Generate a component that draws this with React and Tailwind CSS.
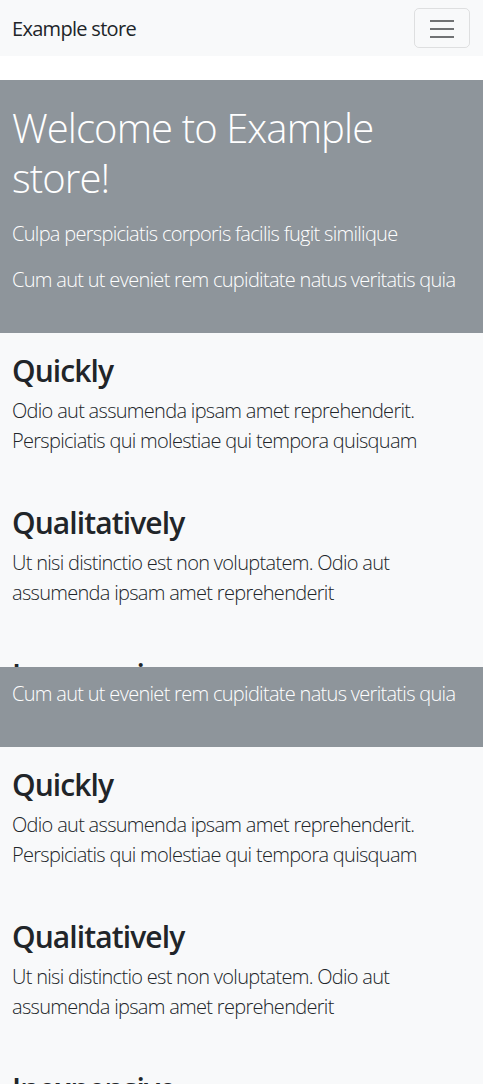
import React from 'react'

const font = { fontFamily: '"Open Sans", "Noto Sans", sans-serif' }

const features = [
  {
    title: 'Quickly',
    text: 'Odio aut assumenda ipsam amet reprehenderit. Perspiciatis qui molestiae qui tempora quisquam',
  },
  {
    title: 'Qualitatively',
    text: 'Ut nisi distinctio est non voluptatem. Odio aut assumenda ipsam amet reprehenderit',
  },
  {
    title: 'Inexpensive',
    text: 'Doloribus distinctio eveniet fugit voluptatibus quod nostrum rerum',
  },
]

function Features() {
  return (
    <div className="bg-[#f8f9fa] px-3 pt-[19px]">
      {features.map((f) => (
        <div key={f.title} className="pb-[32px]">
          <h2 className="text-[30px] leading-[38px] font-semibold text-[#212529] tracking-[-0.9px] mb-[6px]">
            {f.title}
          </h2>
          <p className="text-[20px] leading-[30px] font-light text-[#212529] tracking-[-0.7px] mb-[16px]">
            {f.text}
          </p>
        </div>
      ))}
    </div>
  )
}

function Hero() {
  return (
    <div className="bg-[#8e959b] text-white px-3 pt-[23px] pb-[22px]">
      <h1 className="text-[40px] leading-[50px] font-light tracking-[-0.9px] mb-[16px]">
        Welcome to Example store!
      </h1>
      <p className="text-[20px] leading-[30px] font-light tracking-[-0.7px] mb-[16px]">
        Culpa perspiciatis corporis facilis fugit similique
      </p>
      <p className="text-[20px] leading-[30px] font-light tracking-[-0.7px] mb-[16px]">
        Cum aut ut eveniet rem cupiditate natus veritatis quia
      </p>
    </div>
  )
}

export default function App() {
  return (
    <div style={font} className="bg-white min-h-[1084px] overflow-hidden">
      {/* navbar */}
      <nav className="bg-[#f8f9fa] h-[56px] flex items-center justify-between pl-3 pr-[13px]">
        <span className="text-[20px] text-[#212529] tracking-[-0.7px] pt-[2px]">Example store</span>
        <button className="w-[56px] h-[40px] border border-black/10 rounded-[5px] flex items-center justify-center">
          <svg width="26" height="20" viewBox="0 0 26 20">
            <path d="M1 3h24M1 11h24M1 19h24" stroke="#707274" strokeWidth="2" />
          </svg>
        </button>
      </nav>
      <div className="h-[24px] bg-white" />
      <Hero />

      {/* first copy, cut off by the band */}
      <div className="h-[334px] overflow-hidden">
        <Features />
      </div>

      {/* hero bottom band */}
      <div className="h-[80px] overflow-hidden bg-[#8e959b] flex flex-col justify-end">
        <div className="text-white px-3 pb-[22px]">
          <p className="text-[20px] leading-[30px] font-light tracking-[-0.7px] mb-[16px]">
            Cum aut ut eveniet rem cupiditate natus veritatis quia
          </p>
        </div>
      </div>

      <Features />
    </div>
  )
}
